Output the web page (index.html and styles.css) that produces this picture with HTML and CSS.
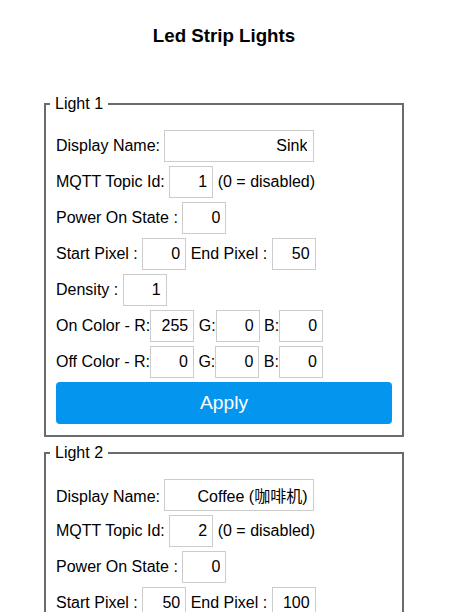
FILE: index.html
```html
<!DOCTYPE html>
<html>
<head>
<meta charset="utf-8">
<title>Led Strip Lights</title>
<link rel="stylesheet" href="styles.css">
</head>
<body>
<div class="wrap">
  <h3 class="title">Led Strip Lights</h3>
  <form class="lights">
    <fieldset class="light">
      <legend class="legend">Light 1</legend>
      <div class="row">Display Name: <input class="field name" type="text" value="Sink"></div>
      <div class="row">MQTT Topic Id: <input class="field" type="text" value="1"> (0 = disabled)</div>
      <div class="row">Power On State : <input class="field" type="text" value="0"></div>
      <div class="row">Start Pixel : <input class="field" type="text" value="0"> End Pixel : <input class="field" type="text" value="50"></div>
      <div class="row">Density : <input class="field" type="text" value="1"></div>
      <div class="row">On Color - R:<input class="field" type="text" value="255"> G:<input class="field" type="text" value="0"> B:<input class="field" type="text" value="0"></div>
      <div class="row">Off Color - R:<input class="field" type="text" value="0"> G:<input class="field" type="text" value="0"> B:<input class="field" type="text" value="0"></div>
      <button class="apply" type="button">Apply</button>
    </fieldset>
    <fieldset class="light">
      <legend class="legend">Light 2</legend>
      <div class="row">Display Name: <input class="field name" type="text" value="Coffee (咖啡机)"></div>
      <div class="row">MQTT Topic Id: <input class="field" type="text" value="2"> (0 = disabled)</div>
      <div class="row">Power On State : <input class="field" type="text" value="0"></div>
      <div class="row">Start Pixel : <input class="field" type="text" value="50"> End Pixel : <input class="field" type="text" value="100"></div>
      <div class="row">Density : <input class="field" type="text" value="1"></div>
      <div class="row">On Color - R:<input class="field" type="text" value="0"> G:<input class="field" type="text" value="255"> B:<input class="field" type="text" value="0"></div>
      <div class="row">Off Color - R:<input class="field" type="text" value="0"> G:<input class="field" type="text" value="0"> B:<input class="field" type="text" value="0"></div>
      <button class="apply" type="button">Apply</button>
    </fieldset>
  </form>
</div>
</body>
</html>
```
FILE: styles.css
```css
html, body {
  margin: 0;
  padding: 0;
  background: #ffffff;
}

body {
  font-family: "Liberation Sans", Arial, "Noto Sans CJK SC", sans-serif;
  font-size: 16px;
  color: #000000;
}

.wrap {
  width: 360px;
  margin-left: 44px;
}

.title {
  margin: 25px 0 0;
  font-size: 18.72px;
  line-height: 22px;
  font-weight: bold;
  text-align: center;
}

.lights {
  margin: 48px 0 0;
}

.light {
  margin: 0 0 7px;
  padding: 17px 10px 11px;
  border: 2px solid #6b6b6b;
  min-width: 0;
}

.legend {
  padding: 0 5px;
  margin-left: -6px;
  font-size: 16px;
}

.row {
  height: 32px;
  margin: 0 0 4px;
  white-space: nowrap;
}

.field {
  box-sizing: border-box;
  width: 44px;
  height: 32px;
  margin: 0;
  padding: 0 5px;
  border: 1px solid #cccccc;
  border-radius: 0;
  background: #ffffff;
  color: #000000;
  font-family: "Liberation Sans", Arial, "Noto Sans CJK SC", sans-serif;
  font-size: 16px;
  text-align: right;
  outline: none;
}

.field.name {
  width: 150px;
  padding-right: 6px;
}

.apply {
  display: block;
  box-sizing: border-box;
  width: 100%;
  height: 42px;
  margin: 0;
  padding: 0;
  border: 0;
  border-radius: 4px;
  background: #0496ee;
  color: #ffffff;
  font-family: "Liberation Sans", Arial, sans-serif;
  font-size: 19.2px;
  cursor: pointer;
}
```
